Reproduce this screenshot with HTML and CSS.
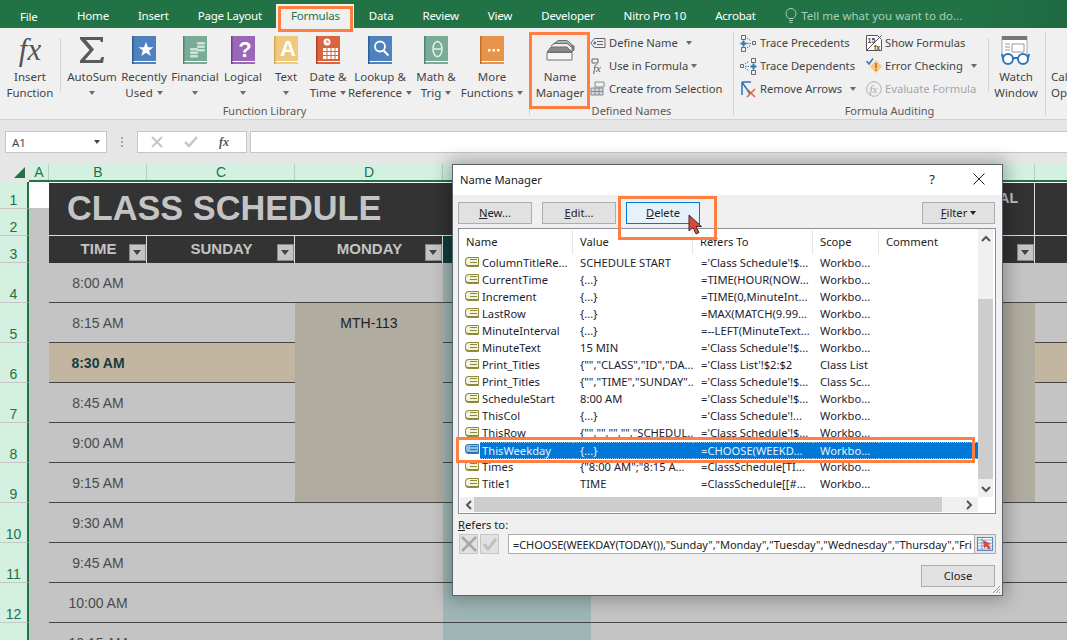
FILE: index.html
```html
<!DOCTYPE html>
<html lang="en">
<head>
<meta charset="utf-8">
<title>Name Manager</title>
<link rel="stylesheet" href="styles.css">
</head>
<body>
<div class="app">
  <nav class="tabbar">
    <span class="tab tab-file">File</span>
    <span class="tab">Home</span>
    <span class="tab">Insert</span>
    <span class="tab">Page Layout</span>
    <span class="tab tab-active">Formulas</span>
    <span class="tab">Data</span>
    <span class="tab">Review</span>
    <span class="tab">View</span>
    <span class="tab">Developer</span>
    <span class="tab">Nitro Pro 10</span>
    <span class="tab">Acrobat</span>
    <span class="tell">
      <svg width="12" height="16" viewBox="0 0 12 16" fill="none" stroke="#a9cdb8" stroke-width="1"><path d="M3.5 10.5C2.5 9 1 8 1 5.5a5 5 0 0 1 10 0C11 8 9.500 9 8.500 10.500z"/><path d="M4 12.500h4M4.500 14.500h3"/></svg>
      Tell me what you want to do...
    </span>
  </nav>

  <section class="ribbon">
    <div class="group g-lib">
      <div class="group-body">
        <div class="big b60"><span class="ico"><span class="fx-big">fx</span></span><span class="lbl">Insert<br>Function</span></div>
        <span class="vsep sep-lib"></span>
        <div class="big b52"><span class="ico"><svg width="26" height="28" viewBox="0 0 26 28"><path d="M1 1h23v5h-2l-1-2H7l8 9.500L6 24h15l1.500-3H25l-1 6H1v-2.500L10.500 14 1 3z" fill="#5a5a5a"/></svg></span><span class="lbl">AutoSum<br><i class="caret solo"></i></span></div>
        <div class="big b52"><span class="ico"><svg width="24" height="28" viewBox="0 0 24 28"><rect width="24" height="28" fill="#4f81bd"/><rect width="1.500" height="28" fill="#2f5f98"/><rect x="1.500" y="25" width="22.500" height="1" fill="#fff"/><path d="M14 6l2 5.200h5.500l-4.400 3.400 1.700 5.400-4.800-3.300L9.200 20l1.700-5.400-4.400-3.400H12z" fill="#fff"/></svg></span><span class="lbl">Recently<br>Used<i class="caret"></i></span></div>
        <div class="big b50"><span class="ico"><svg width="24" height="28" viewBox="0 0 24 28"><rect width="24" height="28" fill="#7aab96"/><rect width="1.500" height="28" fill="#4f8570"/><rect x="1.500" y="25" width="22.500" height="1" fill="#fff"/><g fill="#cfe2da"><rect x="14" y="6" width="8" height="2.500" rx="1"/><rect x="14" y="9.500" width="8" height="2.500" rx="1"/><rect x="14" y="13" width="8" height="2.500" rx="1"/><rect x="7" y="12" width="8" height="2.500" rx="1"/><rect x="7" y="15.500" width="8" height="2.500" rx="1"/><rect x="7" y="19" width="8" height="2.500" rx="1"/></g></svg></span><span class="lbl">Financial<br><i class="caret solo"></i></span></div>
        <div class="big b46"><span class="ico"><svg width="24" height="28" viewBox="0 0 24 28"><rect width="24" height="28" fill="#9a66b8"/><rect width="1.500" height="28" fill="#6f3f92"/><rect x="1.500" y="25" width="22.500" height="1" fill="#fff"/><text x="14" y="21" class="ico-text">?</text></svg></span><span class="lbl">Logical<br><i class="caret solo"></i></span></div>
        <div class="big b40"><span class="ico"><svg width="24" height="28" viewBox="0 0 24 28"><rect width="24" height="28" fill="#eec97f"/><rect width="1.500" height="28" fill="#d6a850"/><rect x="1.500" y="25" width="22.500" height="1" fill="#fff"/><text x="14" y="20" class="ico-text">A</text></svg></span><span class="lbl">Text<br><i class="caret solo"></i></span></div>
        <div class="big b44"><span class="ico"><svg width="24" height="28" viewBox="0 0 24 28"><rect width="24" height="28" fill="#d9643f"/><rect width="1.500" height="28" fill="#b0431f"/><rect x="1.500" y="25" width="22.500" height="1" fill="#fff"/><circle cx="11" cy="6" r="3.500" fill="#fff"/><path d="M11 4v2.200h2" stroke="#d9643f" fill="none"/><path d="M7 12h15v11H7z" fill="#fff"/><path d="M7 15.500h15M7 19.500h15M11 12v11M15 12v11M19 12v11" stroke="#d9643f"/></svg></span><span class="lbl">Date &amp;<br>Time<i class="caret"></i></span></div>
        <div class="big b60"><span class="ico"><svg width="24" height="28" viewBox="0 0 24 28"><rect width="24" height="28" fill="#4f81bd"/><rect width="1.500" height="28" fill="#2f5f98"/><rect x="1.500" y="25" width="22.500" height="1" fill="#fff"/><circle cx="12" cy="10.500" r="5" fill="none" stroke="#fff" stroke-width="1.800"/><path d="M15.500 14.500l5 5" stroke="#fff" stroke-width="2.200"/></svg></span><span class="lbl">Lookup &amp;<br>Reference<i class="caret"></i></span></div>
        <div class="big b52"><span class="ico"><svg width="24" height="28" viewBox="0 0 24 28"><rect width="24" height="28" fill="#7aab96"/><rect width="1.500" height="28" fill="#4f8570"/><rect x="1.500" y="25" width="22.500" height="1" fill="#fff"/><ellipse cx="13.500" cy="13" rx="4.500" ry="7.500" fill="none" stroke="#e6f0ec" stroke-width="1.500"/><path d="M9.500 13h8" stroke="#e6f0ec" stroke-width="1.500"/></svg></span><span class="lbl">Math &amp;<br>Trig<i class="caret"></i></span></div>
        <div class="big b60"><span class="ico"><svg width="24" height="28" viewBox="0 0 24 28"><rect width="24" height="28" fill="#e8934a"/><rect width="1.500" height="28" fill="#c56f25"/><rect x="1.500" y="25" width="22.500" height="1" fill="#fff"/><g fill="#fff"><rect x="8" y="13" width="2.500" height="2.500"/><rect x="12.500" y="13" width="2.500" height="2.500"/><rect x="17" y="13" width="2.500" height="2.500"/></g></svg></span><span class="lbl">More<br>Functions<i class="caret"></i></span></div>
      </div>
      <div class="group-label">Function Library</div>
    </div>

    <div class="group g-names">
      <div class="group-body">
        <div class="big b60 name-mgr"><span class="ico ico-nm"><svg width="30" height="21" viewBox="0 0 30 21" fill="none" stroke="#707070"><path d="M10 3l3-2.500h9l5 4"/><path d="M8 4.500l3-2.500h11l5 4"/><path d="M6 6l3-2.500h13l5 4"/><path d="M2 12l4-5h16l5 5z" fill="#8a8a8a"/><path d="M27 5v7l2-2V6z" fill="#8a8a8a"/><path d="M2 12.500h25v7.500H2z" fill="#f7f7f7"/></svg></span><span class="lbl">Name<br>Manager</span></div>
        <div class="small-col col-names">
          <div class="small"><svg width="16" height="12" viewBox="0 0 16 12" fill="none" stroke="#666"><path d="M4.500 1.500h10.500v9H4.500L.800 6z"/><circle cx="4.800" cy="6" r="1" fill="#2e75b6" stroke="#2e75b6"/><path d="M7 4.500h6M7 7.500h6"/></svg><span>Define Name</span><i class="caret gap12"></i></div>
          <div class="small"><svg width="16" height="16" viewBox="0 0 16 16" fill="none" stroke="#666"><path d="M2 1h6v4H2z"/><text x="3" y="14" class="ico-fx">fx</text></svg><span>Use in Formula</span><i class="caret"></i></div>
          <div class="small"><svg width="16" height="16" viewBox="0 0 16 16" fill="none" stroke="#8a8a8a"><path d="M5 1h9v5H5z"/><path d="M1 7h12v7H1zM1 10.500h12M5 7v7M9 7v7" fill="#cfd8e0"/></svg><span>Create from Selection</span></div>
        </div>
      </div>
      <div class="group-label">Defined Names</div>
    </div>

    <div class="group g-audit">
      <div class="group-body">
        <div class="small-col col-trace">
          <div class="small"><svg width="17" height="18" viewBox="0 0 17 18"><g fill="none" stroke="#666"><path d="M1.500 1.500h4v4h-4zM1.500 13.500h4v4h-4zM12.500 7.500h3v3h-3z"/></g><path d="M3.500 6.500v6M.5 9.500h6" stroke="#2e75b6" stroke-width="2"/><path d="M7 4l4 3M7 9.500h4M7 14l4-3" stroke="#2e75b6" stroke-dasharray="1.500 1"/></svg><span>Trace Precedents</span></div>
          <div class="small"><svg width="17" height="18" viewBox="0 0 17 18"><g fill="none" stroke="#666"><path d="M.5 7.500h3v3h-3zM11.500 1.500h4v4h-4zM11.500 13.500h4v4h-4z"/></g><path d="M13.500 6.500v6M10.500 9.500h6" stroke="#2e75b6" stroke-width="2"/><path d="M5 7l4-3M5 9.500h4M5 11l4 3" stroke="#2e75b6" stroke-dasharray="1.500 1"/></svg><span>Trace Dependents</span></div>
          <div class="small"><svg width="17" height="18" viewBox="0 0 17 18" fill="none"><path d="M2 2v13M2 2h9M2 2l8 12" stroke="#2e75b6" stroke-width="1.500"/><path d="M7 9l8 8M15 9l-8 8" stroke="#d9643f" stroke-width="1.500"/></svg><span>Remove Arrows</span><i class="caret gap12"></i></div>
        </div>
        <div class="small-col col-show">
          <div class="small"><svg width="16" height="16" viewBox="0 0 16 16" fill="#fff" stroke="#555"><path d="M.5.5h11l4 4v11H.5z"/><path d="M.5 15.500l15-15"/><text x="1.500" y="7.500" class="ico-num">15</text><text x="8" y="14.500" class="ico-num">fx</text></svg><span>Show Formulas</span></div>
          <div class="small"><svg width="16" height="16" viewBox="0 0 16 16"><path d="M10 2l6 6.500-6 6.500-6-6.500z" fill="#f5c97a"/><path d="M10 5v5M10 11.200v1.500" stroke="#d9643f" stroke-width="1.800"/><path d="M.5 3l2.500 3L7 .5" stroke="#2e75b6" stroke-width="1.500" fill="none"/></svg><span>Error Checking</span><i class="caret gap12"></i></div>
          <div class="small dis"><svg width="16" height="16" viewBox="0 0 16 16" fill="none" stroke="#b0b0b0"><circle cx="8" cy="8" r="7.300"/><text x="3.500" y="12" class="ico-fx dim">fx</text></svg><span>Evaluate Formula</span></div>
        </div>
        <span class="vsep"></span>
        <div class="big b54"><span class="ico"><svg width="30" height="30" viewBox="0 0 30 30"><path d="M1 .5h25v21H1z" fill="#fff" stroke="#aaa"/><rect x="1" y="0" width="25" height="4" fill="#777"/><path d="M11 8h12v8H11zM4 8h5M4 11h5M4 14h5" fill="none" stroke="#999"/><circle cx="7" cy="23" r="5" fill="#fff" stroke="#2e75b6" stroke-width="2"/><circle cx="22" cy="23" r="5" fill="#fff" stroke="#2e75b6" stroke-width="2"/><path d="M12 22h5M2 22L1 18M27 22l1-4" stroke="#2e75b6" stroke-width="2"/></svg></span><span class="lbl">Watch<br>Window</span></div>
      </div>
      <div class="group-label">Formula Auditing</div>
    </div>

    <div class="group g-calc">
      <div class="group-body">
        <div class="big b60 calc"><span class="ico"></span><span class="lbl">Calculation<br>Options</span></div>
      </div>
    </div>
  </section>

  <div class="strip"></div>

  <div class="formula-bar">
    <div class="namebox"><span>A1</span><i class="caret dark"></i></div>
    <span class="dots"></span>
    <div class="fx-box">
      <svg width="12" height="12" viewBox="0 0 12 12" stroke="#c6c6c6" stroke-width="2"><path d="M1 1l10 10M11 1L1 11"/></svg>
      <svg width="14" height="12" viewBox="0 0 14 12" stroke="#c6c6c6" stroke-width="2.500" fill="none"><path d="M1 6l4 4 8-9"/></svg>
      <span class="fx-small">fx</span>
    </div>
    <div class="formula-input"></div>
  </div>

  <div class="strip"></div>

  <div class="sheet">
    <div class="colhead">
      <div class="corner"><i class="tri"></i></div>
      <div class="ch c-a">A</div><div class="ch c-b">B</div><div class="ch c-w">C</div><div class="ch c-w">D</div><div class="ch c-w">E</div><div class="ch c-w"></div><div class="ch c-w"></div><div class="ch c-w"></div><div class="ch c-i"></div>
    </div>

    <div class="titlewrap">
      <div class="rowheads">
        <div class="rh r1">1</div><div class="rh r2">2</div><div class="rh r3">3</div>
      </div>
      <div class="cola"><div class="a1"></div><div class="a-rest"></div></div>
      <div class="titleright">
        <div class="titlerow"><div class="title">CLASS SCHEDULE</div><div class="title-al">AL</div><div class="title-i"></div></div>
        <div class="headrow">
          <div class="hc c-b">TIME<i class="filter"></i></div>
          <div class="hc c-w">SUNDAY<i class="filter"></i></div>
          <div class="hc c-w">MONDAY<i class="filter"></i></div>
          <div class="hc c-w teal-dark"></div>
          <div class="hc c-2w"></div>
          <div class="hc c-w"><i class="filter"></i></div>
          <div class="hc c-i"></div>
        </div>
      </div>
    </div>

    <div class="row"><div class="rh rb">4</div><div class="ca"></div><div class="cell c-b time">8:00 AM</div><div class="cell c-w"></div><div class="cell c-w"></div><div class="cell c-w teal"></div><div class="cell c-2w"></div><div class="cell c-w"></div><div class="cell c-i"></div></div>
    <div class="row"><div class="rh rb">5</div><div class="ca"></div><div class="cell c-b time">8:15 AM</div><div class="cell c-w"></div><div class="cell c-w merged course">MTH-113</div><div class="cell c-w teal"></div><div class="cell c-2w"></div><div class="cell c-w merged"></div><div class="cell c-i"></div></div>
    <div class="row"><div class="rh rb">6</div><div class="ca"></div><div class="cell c-b time now">8:30 AM</div><div class="cell c-w now"></div><div class="cell c-w merged"></div><div class="cell c-w teal"></div><div class="cell c-2w"></div><div class="cell c-w merged"></div><div class="cell c-i now"></div></div>
    <div class="row"><div class="rh rb">7</div><div class="ca"></div><div class="cell c-b time">8:45 AM</div><div class="cell c-w"></div><div class="cell c-w merged"></div><div class="cell c-w teal"></div><div class="cell c-2w"></div><div class="cell c-w merged"></div><div class="cell c-i"></div></div>
    <div class="row"><div class="rh rb">8</div><div class="ca"></div><div class="cell c-b time">9:00 AM</div><div class="cell c-w"></div><div class="cell c-w merged"></div><div class="cell c-w teal"></div><div class="cell c-2w"></div><div class="cell c-w merged"></div><div class="cell c-i"></div></div>
    <div class="row"><div class="rh rb">9</div><div class="ca"></div><div class="cell c-b time">9:15 AM</div><div class="cell c-w"></div><div class="cell c-w merged last"></div><div class="cell c-w teal"></div><div class="cell c-2w"></div><div class="cell c-w merged last"></div><div class="cell c-i"></div></div>
    <div class="row"><div class="rh rb">10</div><div class="ca"></div><div class="cell c-b time">9:30 AM</div><div class="cell c-w"></div><div class="cell c-w"></div><div class="cell c-w teal"></div><div class="cell c-2w"></div><div class="cell c-w"></div><div class="cell c-i"></div></div>
    <div class="row"><div class="rh rb">11</div><div class="ca"></div><div class="cell c-b time">9:45 AM</div><div class="cell c-w"></div><div class="cell c-w"></div><div class="cell c-w teal"></div><div class="cell c-2w"></div><div class="cell c-w"></div><div class="cell c-i"></div></div>
    <div class="row"><div class="rh rb">12</div><div class="ca"></div><div class="cell c-b time">10:00 AM</div><div class="cell c-w"></div><div class="cell c-w"></div><div class="cell c-w teal"></div><div class="cell c-2w"></div><div class="cell c-w"></div><div class="cell c-i"></div></div>
    <div class="row"><div class="rh rb">13</div><div class="ca"></div><div class="cell c-b time">10:15 AM</div><div class="cell c-w"></div><div class="cell c-w"></div><div class="cell c-w teal"></div><div class="cell c-2w"></div><div class="cell c-w"></div><div class="cell c-i"></div></div>
  </div>

  <div class="dialog">
    <div class="dlg-title"><span class="dlg-name">Name Manager</span><span class="dlg-help">?</span><svg class="dlg-close" width="12" height="12" viewBox="0 0 12 12" stroke="#222"><path d="M.5.5l11 11M11.500.5l-11 11"/></svg></div>
    <div class="dlg-tools">
      <button class="btn"><u>N</u>ew...</button>
      <button class="btn"><u>E</u>dit...</button>
      <button class="btn btn-hot"><u>D</u>elete</button>
      <button class="btn btn-filter"><u>F</u>ilter<i class="caret dark"></i></button>
    </div>
    <div class="list">
      <div class="list-main">
        <div class="list-head"><span class="col-name">Name</span><span class="col-val">Value</span><span class="col-ref">Refers To</span><span class="col-scope">Scope</span><span class="col-com">Comment</span></div>
        <div class="list-row"><span class="col-name"><i class="tag"></i><b>ColumnTitleRe...</b></span><span class="col-val">SCHEDULE START</span><span class="col-ref">='Class Schedule'!$...</span><span class="col-scope">Workbo...</span></div>
        <div class="list-row"><span class="col-name"><i class="tag"></i><b>CurrentTime</b></span><span class="col-val">{...}</span><span class="col-ref">=TIME(HOUR(NOW...</span><span class="col-scope">Workbo...</span></div>
        <div class="list-row"><span class="col-name"><i class="tag"></i><b>Increment</b></span><span class="col-val">{...}</span><span class="col-ref">=TIME(0,MinuteInt...</span><span class="col-scope">Workbo...</span></div>
        <div class="list-row"><span class="col-name"><i class="tag"></i><b>LastRow</b></span><span class="col-val">{...}</span><span class="col-ref">=MAX(MATCH(9.99...</span><span class="col-scope">Workbo...</span></div>
        <div class="list-row"><span class="col-name"><i class="tag"></i><b>MinuteInterval</b></span><span class="col-val">{...}</span><span class="col-ref">=--LEFT(MinuteText...</span><span class="col-scope">Workbo...</span></div>
        <div class="list-row"><span class="col-name"><i class="tag"></i><b>MinuteText</b></span><span class="col-val">15 MIN</span><span class="col-ref">='Class Schedule'!$...</span><span class="col-scope">Workbo...</span></div>
        <div class="list-row"><span class="col-name"><i class="tag"></i><b>Print_Titles</b></span><span class="col-val">{"","CLASS","ID","DA...</span><span class="col-ref">='Class List'!$2:$2</span><span class="col-scope">Class List</span></div>
        <div class="list-row"><span class="col-name"><i class="tag"></i><b>Print_Titles</b></span><span class="col-val">{"","TIME","SUNDAY"...</span><span class="col-ref">='Class Schedule'!$...</span><span class="col-scope">Class Sc...</span></div>
        <div class="list-row"><span class="col-name"><i class="tag"></i><b>ScheduleStart</b></span><span class="col-val">8:00 AM</span><span class="col-ref">='Class Schedule'!$...</span><span class="col-scope">Workbo...</span></div>
        <div class="list-row"><span class="col-name"><i class="tag"></i><b>ThisCol</b></span><span class="col-val">{...}</span><span class="col-ref">='Class Schedule'!...</span><span class="col-scope">Workbo...</span></div>
        <div class="list-row"><span class="col-name"><i class="tag"></i><b>ThisRow</b></span><span class="col-val">{"","","","","SCHEDUL...</span><span class="col-ref">='Class Schedule'!$...</span><span class="col-scope">Workbo...</span></div>
        <div class="list-row selected"><span class="col-name"><i class="tag tag-sel"></i><b>ThisWeekday</b></span><span class="col-val">{...}</span><span class="col-ref">=CHOOSE(WEEKD...</span><span class="col-scope">Workbo...</span></div>
        <div class="list-row"><span class="col-name"><i class="tag"></i><b>Times</b></span><span class="col-val">{"8:00 AM";"8:15 A...</span><span class="col-ref">=ClassSchedule[TI...</span><span class="col-scope">Workbo...</span></div>
        <div class="list-row"><span class="col-name"><i class="tag"></i><b>Title1</b></span><span class="col-val">TIME</span><span class="col-ref">=ClassSchedule[[#...</span><span class="col-scope">Workbo...</span></div>
        <div class="hscroll"><svg width="8" height="10" viewBox="0 0 8 10" fill="none" stroke="#555" stroke-width="2"><path d="M6 1L2 5l4 4"/></svg><span class="hthumb"></span><svg width="8" height="10" viewBox="0 0 8 10" fill="none" stroke="#555" stroke-width="2"><path d="M2 1l4 4-4 4"/></svg></div>
      </div>
      <div class="vscroll"><svg width="10" height="8" viewBox="0 0 10 8" fill="none" stroke="#555" stroke-width="2"><path d="M1 6l4-4 4 4"/></svg><span class="vthumb"></span><svg width="10" height="8" viewBox="0 0 10 8" fill="none" stroke="#555" stroke-width="2"><path d="M1 2l4 4 4-4"/></svg></div>
    </div>
    <div class="refers-label"><u>R</u>efers to:</div>
    <div class="refers-row">
      <span class="rbtn"><svg width="16" height="16" viewBox="0 0 16 16" stroke="#a8a8a8" stroke-width="2.500"><path d="M1 1l14 14M15 1L1 15"/></svg></span>
      <span class="rbtn"><svg width="16" height="14" viewBox="0 0 16 14" stroke="#c0c0c0" stroke-width="3" fill="none"><path d="M2 7l4 5 8-10"/></svg></span>
      <div class="refers-input">=CHOOSE(WEEKDAY(TODAY()),"Sunday","Monday","Tuesday","Wednesday","Thursday","Fri</div>
      <span class="refbtn"><svg width="16" height="14" viewBox="0 0 16 14"><rect x=".5" y=".5" width="15" height="13" fill="#fff" stroke="#5b86b5"/><path d="M1 3h14M1 6h14M1 9h14M1 12h14M5 1v12" stroke="#7fa3c8"/><path d="M6 3l8 4-3 1 3 3-2 1.500-3-3-2 2z" fill="#d9483b"/></svg></span>
    </div>
    <div class="dlg-foot"><button class="btn">Close</button></div>
    <svg class="grip" width="9" height="9" viewBox="0 0 9 9" stroke="#9a9a9a"><path d="M8 1L1 8M8 4L4 8M8 7L7 8"/></svg>
  </div>

  <i class="mark mark-tab"></i>
  <i class="mark mark-nm"></i>
  <i class="mark mark-del"></i>
  <i class="mark mark-sel"></i>
  <svg class="cursor" width="14" height="21" viewBox="0 0 14 21"><path d="M1 1v16l4-3.500 3 6.500 3-1.500-3-6h5.500z" fill="#e0473a" stroke="#333" stroke-width="1"/></svg>
</div>
</body>
</html>
```

FILE: styles.css
```css
* { box-sizing: border-box; }
html, body { margin: 0; padding: 0; }
body { width: 1067px; height: 640px; overflow: hidden; background: #fff; }
i { font-style: normal; display: inline-block; }
.app { position: relative; width: 1067px; height: 640px; overflow: hidden; font-family: "Noto Sans", "Open Sans", sans-serif; font-size: 11.5px; color: #444; }

/* tabs */
.tabbar { display: flex; align-items: flex-start; height: 28px; background: linear-gradient(90deg, #217346 0, #217346 90%, #1f6a41 100%); color: #fff; }
.tab { padding: 8px 14.5px 0; height: 28px; line-height: 16px; white-space: nowrap; letter-spacing: -.2px; }
.tab-file { width: 62.5px; padding-left: 20px; padding-top: 9px; }
.tab-active { background: #f0f0f0; color: #217346; margin-top: 4px; padding-top: 4px; height: 24px; }
.tell { margin-left: 15px; margin-top: 8px; display: flex; align-items: center; gap: 4px; color: #a9cdb8; line-height: 16px; }

/* ribbon */
.ribbon { display: flex; height: 92px; background: #f0f0f0; border-bottom: 1px solid #d2d2d2; }
.group { display: flex; flex-direction: column; border-right: 1px solid #d2d2d2; margin: 4px 0; }
.group-body { display: flex; height: 71px; }
.group-label { height: 17px; line-height: 19px; text-align: center; color: #5a5a5a; font-size: 11px; }
.g-lib { width: 530px; }
.g-names { width: 204px; }
.g-audit { width: 312px; }
.g-calc { flex: 1; border-right: 0; overflow: hidden; }
.big { display: flex; flex-direction: column; align-items: center; flex: none; }
.b60 { width: 60px; } .b54 { width: 54px; } .b52 { width: 52px; } .b50 { width: 50px; } .b46 { width: 46px; } .b44 { width: 44px; } .b40 { width: 40px; }
.ico { height: 37px; padding-top: 4px; display: flex; align-items: flex-start; justify-content: center; }
.ico-nm { padding-top: 8px; }
.lbl { text-align: center; line-height: 16px; white-space: nowrap; }
.vsep { width: 1px; background: #d2d2d2; flex: none; height: 54px; margin-top: 6px; }
.sep-lib { margin-right: 5px; }
.fx-big { font: italic 31px/28px "Liberation Serif", serif; color: #555; }
.caret { width: 0; height: 0; border-left: 3.5px solid transparent; border-right: 3.5px solid transparent; border-top: 4px solid #6a6a6a; margin-left: 4px; vertical-align: 2px; }
.caret.solo { margin-left: 0; }
.caret.dark { border-top-color: #444; }
.ico-text { font: bold 22px "Liberation Sans", sans-serif; fill: #fff; text-anchor: middle; stroke: none; }
.ico-fx { font: italic 11px "Liberation Serif", serif; fill: #555; stroke: none; }
.ico-fx.dim { fill: #a8a8a8; }
.ico-num { font: bold 7px "Liberation Sans", sans-serif; fill: #444; stroke: none; }
.small-col { display: flex; flex-direction: column; margin-top: -1px; }
.small { display: flex; align-items: center; height: 23px; gap: 3px; white-space: nowrap; font-size: 11.2px; }
.small svg { flex: none; }
.small .caret { align-self: center; margin-left: 0; }
.small .gap12 { margin-left: 5px; }
.col-names { width: 144px; }
.col-trace { margin-left: 6px; width: 126px; }
.col-show { width: 122px; }
.dis { color: #a6a6a6; }
.calc { margin-left: 5px; align-items: flex-start; }
.calc .lbl { text-align: left; }

/* formula bar */
.strip { height: 11px; background: #e6e6e6; }
.formula-bar { display: flex; height: 22px; background: #e6e6e6; padding-left: 5px; }
.namebox { width: 102px; border: 1px solid #c6c6c6; background: #fff; display: flex; align-items: center; justify-content: space-between; padding: 0 6px; color: #444; }
.dots { width: 2px; height: 10px; margin: 6px 14px 0; border-left: 2px dotted #a8a8a8; }
.fx-box { width: 110px; border: 1px solid #c6c6c6; background: #fff; display: flex; align-items: center; gap: 21px; padding-left: 13px; }
.fx-small { font: italic bold 12px "Liberation Serif", serif; color: #555; }
.formula-input { flex: 1; margin-left: 3px; border: 1px solid #c6c6c6; border-right: 0; background: #fff; }

/* sheet */
.sheet { font-family: "Liberation Sans", sans-serif; font-size: 14px; height: 476px; overflow: hidden; }
.colhead { display: flex; height: 18px; background: #d3f0e0; border-bottom: 2px solid #217346; color: #217346; }
.corner { width: 29px; background: #e6e6e6; margin-bottom: -2px; position: relative; }
.tri { position: absolute; left: 14px; top: 3px; width: 0; height: 0; border-left: 11px solid transparent; border-bottom: 11px solid #217346; }
.ch { text-align: center; line-height: 17px; padding-left: 1px; border-right: 1px solid #b5cfc0; }
.c-a { width: 20px; flex: none; }
.c-b { width: 98px; flex: none; }
.c-w { width: 148px; flex: none; }
.c-2w { width: 296px; flex: none; }
.c-i { flex: 1; border-right: 0; }
.titlewrap { display: flex; height: 81px; }
.rowheads { width: 29px; flex: none; display: flex; flex-direction: column; }
.rh { width: 29px; flex: none; background: #d3f0e0; border-right: 2px solid #217346; border-bottom: 1px solid #c6c6c6; color: #217346; display: flex; align-items: flex-end; justify-content: center; line-height: 14px; padding-bottom: 1px; }
.r1 { height: 27px; } .r2 { height: 27px; } .r3 { height: 27px; }
.cola { width: 20px; flex: none; display: flex; flex-direction: column; }
.a1 { height: 26px; background: #fff; }
.a-rest { flex: 1; background: #c4c4c4; }
.titleright { flex: 1; display: flex; flex-direction: column; min-width: 0; }
.titlerow { display: flex; height: 53px; margin-top: 1px; background: #333; border-bottom: 1px solid #dcdcdc; color: #c4c4c4; font-weight: bold; }
.title { width: 940px; flex: none; padding-left: 18px; font-size: 34.3px; line-height: 50px; }
.title-al { width: 46px; flex: none; font-size: 14px; line-height: 30px; text-align: right; padding-right: 16px; border-right: 1px solid #dcdcdc; }
.title-i { flex: 1; }
.headrow { display: flex; height: 27px; background: #333; }
.hc { position: relative; color: #c4c4c4; font-weight: bold; font-size: 15px; text-align: center; line-height: 25px; padding-left: 2px; border-right: 1px solid #dcdcdc; }
.hc.c-2w, .hc.teal-dark { border-right: 0; }
.hc.c-i { border-right: 0; }
.teal-dark { background: #0f3d3d; }
.filter { position: absolute; right: 0; top: 8px; width: 17px; height: 17px; background: #c4c4c4; border: 1px solid #888; }
.filter::after { content: ""; position: absolute; left: 3px; top: 5px; border-left: 4.5px solid transparent; border-right: 4.500px solid transparent; border-top: 5px solid #444; }
.row { display: flex; height: 40px; }
.row .rh { height: 40px; }
.ca { width: 20px; flex: none; background: #c4c4c4; }
.cell { height: 40px; background: #c4c4c4; border-bottom: 1px solid #444; text-align: center; line-height: 40px; color: #4a4a4a; }
.time { font-size: 14px; }
.now { background: #c2b6a0; }
.time.now { font-weight: bold; color: #143c46; }
.merged { background: #b0ac9f; border-bottom: 0; }
.merged.last { border-bottom: 1px solid #444; }
.course { color: #222; }
.teal { background: #9fb6b6; }

/* dialog */
.dialog { position: absolute; left: 452px; top: 164px; width: 551px; height: 432px; background: #f0f0f0; border: 1px solid #59636b; box-shadow: 0 0 16px 4px rgba(0,0,0,.28); color: #222; font-size: 11.2px; }
.dlg-title { display: flex; align-items: center; height: 30px; background: #fff; padding: 0 0 2px 7px; color: #222; }
.dlg-name { flex: 1; }
.dlg-help { margin-right: 38px; font-size: 13px; }
.dlg-close { margin-right: 17px; }
.dlg-tools { display: flex; padding: 7px 7px 0 5px; gap: 10px; height: 33px; }
.btn { width: 74px; height: 22px; padding: 0; background: #e1e1e1; border: 1px solid #adadad; font: inherit; color: #222; line-height: 18px; }
.btn-hot { background: #e5f1fb; border-color: #0078d7; }
.btn-filter { margin-left: auto; width: 73px; }
.btn-filter .caret { margin-left: 3px; border-top-color: #222; }
.list { display: flex; width: 538px; height: 286px; margin-left: 5px; background: #fff; border: 1px solid #8a9099; }
.list-main { width: 519px; flex: none; }
.list-head { display: flex; height: 26px; align-items: center; }
.list-head span { height: 24px; line-height: 24px; border-right: 1px solid #e5e5e5; }
.list-head .col-com { border-right: 0; }
.list-head .col-name, .list-head .col-val, .list-head .col-ref, .list-head .col-scope, .list-head .col-com { padding-left: 7px; }
.col-name { width: 114px; flex: none; display: flex; align-items: center; white-space: nowrap; }
.col-val { width: 120px; flex: none; white-space: nowrap; overflow: hidden; }
.col-ref { width: 120px; flex: none; white-space: nowrap; overflow: hidden; }
.col-scope { width: 66px; flex: none; white-space: nowrap; overflow: hidden; }
.col-com { flex: 1; }
.list-row { display: flex; height: 17px; line-height: 16px; color: #1c1c30; }
.list-row .col-name { padding-left: 6px; }
.list-row .col-val { padding-left: 7px; }
.list-row .col-ref { padding-left: 8px; }
.list-row .col-scope { padding-left: 7px; }
.list-row b { font-weight: normal; height: 17px; flex: 1; padding-left: 2px; overflow: hidden; }
.tag { width: 14px; height: 10px; flex: none; margin-right: 1px; margin-top: -3px; border: 1px solid #8c8a3a; border-bottom-width: 2px; border-radius: 4px 1px 1px 4px; background: linear-gradient(#8c8a3a, #8c8a3a) 4px 1px / 7px 1px no-repeat, linear-gradient(#8c8a3a, #8c8a3a) 4px 4px / 7px 1px no-repeat, #f3f2de; }
.tag-sel { border-color: #2e75b6; background: linear-gradient(#2e75b6, #2e75b6) 4px 1px / 7px 1px no-repeat, linear-gradient(#2e75b6, #2e75b6) 4px 4px / 7px 1px no-repeat, #8fc0ea; }
.selected { color: #e6f0fa; }
.selected b, .selected .col-val, .selected .col-ref, .selected .col-scope { background: #0078d7; border-top: 1px dotted #8fbfe8; border-bottom: 1px dotted #8fbfe8; line-height: 15px; }
.selected::after { content: ""; flex: 1; background: #0078d7; border-top: 1px dotted #8fbfe8; border-bottom: 1px dotted #8fbfe8; }
.hscroll { display: flex; align-items: center; justify-content: space-between; height: 15px; margin-top: 4px; margin-left: 1px; background: #f0f0f0; padding: 0 5px; }
.hthumb { height: 15px; width: 468px; margin-right: 22px; background: #cdcdcd; }
.vscroll { width: 15px; flex: none; height: 268px; background: #f0f0f0; display: flex; flex-direction: column; align-items: center; padding-top: 6px; }
.vthumb { width: 15px; height: 180px; margin: 56px 0 6px; background: #cdcdcd; }
.refers-label { padding: 2px 0 0 5px; height: 19px; line-height: 16px; color: #222; margin-top: 1px; }
.refers-row { display: flex; height: 20px; padding-left: 6px; }
.rbtn { width: 19px; height: 20px; margin-right: 2px; background: #e1e1e1; border: 1px solid #c6c6c6; display: flex; align-items: center; justify-content: center; flex: none; }
.refers-input { width: 466px; margin-left: 7px; flex: none; height: 20px; border: 1px solid #adadad; border-right: 0; background: #fff; font-size: 11px; letter-spacing: -.08px; line-height: 19px; padding-left: 4px; white-space: nowrap; overflow: hidden; color: #222; }
.refbtn { width: 22px; height: 20px; background: #dfe6ee; border: 1px solid #adadad; display: flex; align-items: center; justify-content: center; flex: none; }
.dlg-foot { display: flex; justify-content: flex-end; padding: 11px 7px 0 0; }
.grip { position: absolute; right: 1px; bottom: 1px; }

/* annotations over the screenshot */
.mark { position: absolute; border: 3px solid #ff7f41; }
.mark-tab { left: 278px; top: 6px; width: 75px; height: 26px; }
.mark-nm { left: 529px; top: 32px; width: 61px; height: 77px; }
.mark-del { left: 618px; top: 196px; width: 99px; height: 44px; }
.mark-sel { left: 456px; top: 437px; width: 519px; height: 26px; }
.cursor { position: absolute; left: 688px; top: 214px; }
```
